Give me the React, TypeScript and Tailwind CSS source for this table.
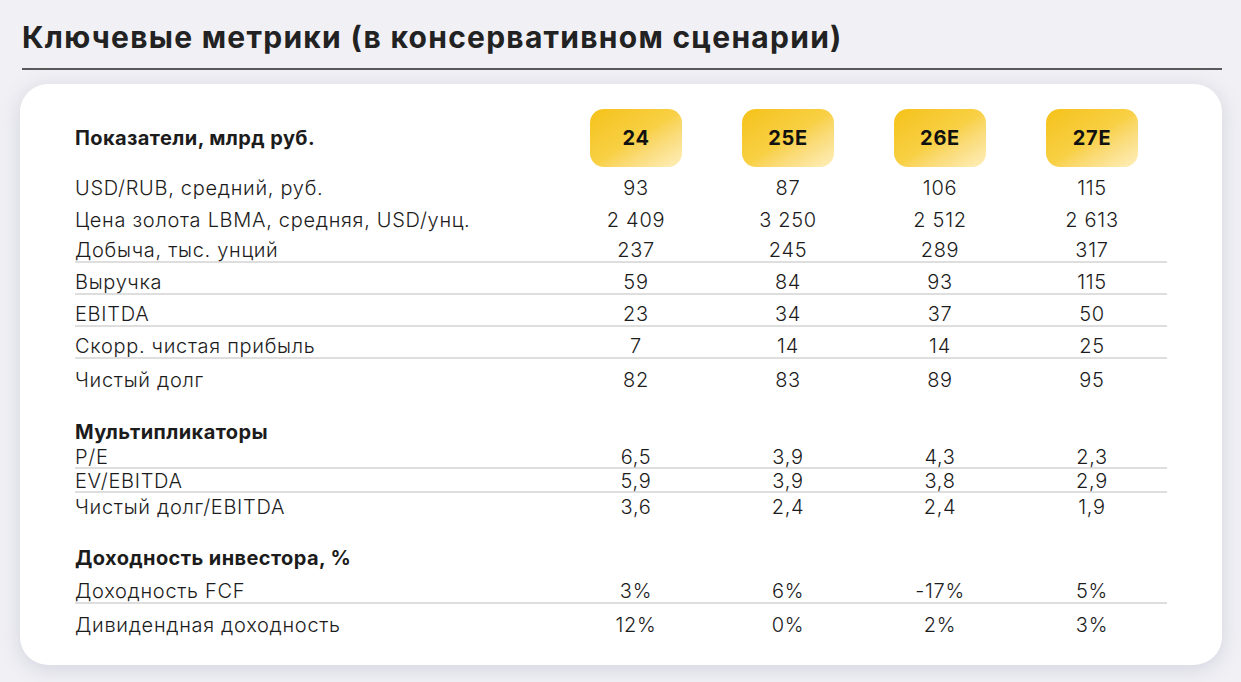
const years = ["24", "25E", "26E", "27E"];

type Row = { label: string; values: string[]; line?: boolean };

const base: Row[] = [
  { label: "USD/RUB, средний, руб.", values: ["93", "87", "106", "115"] },
  { label: "Цена золота LBMA, средняя, USD/унц.", values: ["2 409", "3 250", "2 512", "2 613"] },
  { label: "Добыча, тыс. унций", values: ["237", "245", "289", "317"], line: true },
  { label: "Выручка", values: ["59", "84", "93", "115"], line: true },
  { label: "EBITDA", values: ["23", "34", "37", "50"], line: true },
  { label: "Скорр. чистая прибыль", values: ["7", "14", "14", "25"], line: true },
  { label: "Чистый долг", values: ["82", "83", "89", "95"] },
];

const multiples: Row[] = [
  { label: "P/E", values: ["6,5", "3,9", "4,3", "2,3"], line: true },
  { label: "EV/EBITDA", values: ["5,9", "3,9", "3,8", "2,9"], line: true },
  { label: "Чистый долг/EBITDA", values: ["3,6", "2,4", "2,4", "1,9"] },
];

const yields: Row[] = [
  { label: "Доходность FCF", values: ["3%", "6%", "-17%", "5%"], line: true },
  { label: "Дивидендная доходность", values: ["12%", "0%", "2%", "3%"] },
];

function TableRow({ row, tight }: { row: Row; tight?: boolean }) {
  return (
    <div
      className={`grid grid-cols-[485px_repeat(4,152px)] items-end ${
        tight ? "h-[24px] leading-[20px]" : "h-[32px] leading-[22px]"
      } ${row.line ? "border-b-2 border-[#dedede]" : ""}`}
    >
      <div className="font-light">{row.label}</div>
      {row.values.map((v, i) => (
        <div key={i} className="text-center font-light">
          {v}
        </div>
      ))}
    </div>
  );
}

export default function App() {
  return (
    <div
      className="min-h-screen bg-[#f0f0f5] px-[22px] pt-[18px] text-[#1c1c1c]"
      style={{ fontFamily: "Inter, 'Noto Sans', sans-serif" }}
    >
      <h1 className="text-[30px] font-bold leading-[38px] tracking-[0.042em] text-[#222]">
        Ключевые метрики (в консервативном сценарии)
      </h1>
      <div className="mt-[12px] h-[2px] w-[1200px] bg-[#5a5a5a]" />

      <div className="mt-[14px] w-[1202px] -ml-[2px] rounded-[28px] bg-white px-[55px] pt-[25px] pb-[29px] text-[20px] tracking-[0.035em] shadow-[0_4px_20px_rgba(110,110,140,0.22)]">
        <div className="grid h-[58px] grid-cols-[485px_repeat(4,152px)] items-center">
          <div className="font-bold tracking-[0.02em]">Показатели, млрд руб.</div>
          {years.map((y) => (
            <div key={y} className="flex justify-center">
              <div className="flex h-[58px] w-[92px] items-center justify-center rounded-[14px] bg-linear-to-br from-[#f5c213] via-[#f8d043] to-[#feeebb] text-[20px] font-bold text-[#111]">
                {y}
              </div>
            </div>
          ))}
        </div>

        {base.map((r) => (
          <TableRow key={r.label} row={r} />
        ))}

        <div className="pt-[30px] pb-[2px] font-bold leading-[22px] tracking-[0.02em]">Мультипликаторы</div>
        {multiples.map((r) => (
          <TableRow key={r.label} row={r} tight />
        ))}

        <div className="pt-[30px] pb-[3px] font-bold leading-[22px] tracking-[0.02em]">Доходность инвестора, %</div>
        {yields.map((r) => (
          <TableRow key={r.label} row={r} />
        ))}
      </div>
    </div>
  );
}
